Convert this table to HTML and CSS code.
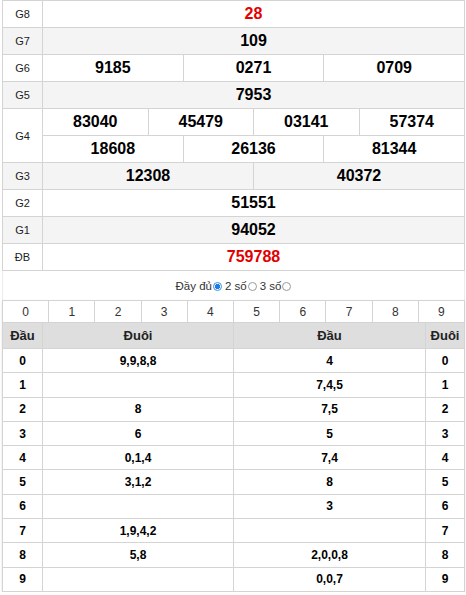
FILE: index.html
```html
<!DOCTYPE html>
<html lang="vi">
<head>
<meta charset="utf-8">
<title>Kết quả xổ số</title>
<link rel="stylesheet" href="styles.css">
</head>
<body>
<div class="wrap">
  <div class="kq">
    <div class="row"><div class="lbl">G8</div><div class="vals"><div class="line"><div class="num red">28</div></div></div></div>
    <div class="row alt"><div class="lbl">G7</div><div class="vals"><div class="line"><div class="num">109</div></div></div></div>
    <div class="row"><div class="lbl">G6</div><div class="vals"><div class="line"><div class="num">9185</div><div class="num">0271</div><div class="num">0709</div></div></div></div>
    <div class="row alt"><div class="lbl">G5</div><div class="vals"><div class="line"><div class="num">7953</div></div></div></div>
    <div class="row"><div class="lbl">G4</div><div class="vals">
      <div class="line"><div class="num">83040</div><div class="num">45479</div><div class="num">03141</div><div class="num">57374</div></div>
      <div class="line"><div class="num">18608</div><div class="num">26136</div><div class="num">81344</div></div>
    </div></div>
    <div class="row alt"><div class="lbl">G3</div><div class="vals"><div class="line"><div class="num">12308</div><div class="num">40372</div></div></div></div>
    <div class="row"><div class="lbl">G2</div><div class="vals"><div class="line"><div class="num">51551</div></div></div></div>
    <div class="row alt"><div class="lbl">G1</div><div class="vals"><div class="line"><div class="num">94052</div></div></div></div>
    <div class="row"><div class="lbl">ĐB</div><div class="vals"><div class="line"><div class="num red">759788</div></div></div></div>
  </div>

  <div class="opts">
    <label class="opt">Đầy đủ<input type="radio" name="mode" checked></label>
    <label class="opt">2 số<input type="radio" name="mode"></label>
    <label class="opt">3 số<input type="radio" name="mode"></label>
  </div>

  <div class="loto">
    <div class="digits">
      <div>0</div><div>1</div><div>2</div><div>3</div><div>4</div><div>5</div><div>6</div><div>7</div><div>8</div><div>9</div>
    </div>
    <div class="lrow head"><div>Đầu</div><div>Đuôi</div><div>Đầu</div><div>Đuôi</div></div>
    <div class="lrow"><div>0</div><div>9,9,8,8</div><div>4</div><div>0</div></div>
    <div class="lrow"><div>1</div><div></div><div>7,4,5</div><div>1</div></div>
    <div class="lrow"><div>2</div><div>8</div><div>7,5</div><div>2</div></div>
    <div class="lrow"><div>3</div><div>6</div><div>5</div><div>3</div></div>
    <div class="lrow"><div>4</div><div>0,1,4</div><div>7,4</div><div>4</div></div>
    <div class="lrow"><div>5</div><div>3,1,2</div><div>8</div><div>5</div></div>
    <div class="lrow"><div>6</div><div></div><div>3</div><div>6</div></div>
    <div class="lrow"><div>7</div><div>1,9,4,2</div><div></div><div>7</div></div>
    <div class="lrow"><div>8</div><div>5,8</div><div>2,0,0,8</div><div>8</div></div>
    <div class="lrow"><div>9</div><div></div><div>0,0,7</div><div>9</div></div>
  </div>
</div>
</body>
</html>
```

FILE: styles.css
```css
* { box-sizing: border-box; }
html, body { margin: 0; padding: 0; background: #fff; }
body { font-family: Arial, "Liberation Sans", sans-serif; color: #000; }

.wrap { width: 463px; margin-left: 2px; }

.kq { border-top: 1px solid #d4d4d4; border-left: 1px solid #d4d4d4; }
.row { display: flex; background: #fff; }
.row.alt { background: #f4f4f4; }
.lbl {
  width: 40px; flex: none;
  display: flex; align-items: center; justify-content: center;
  font-size: 11px; color: #222;
  border-right: 1px solid #d4d4d4; border-bottom: 1px solid #d4d4d4;
}
.vals { flex: 1; display: flex; flex-direction: column; }
.line { display: flex; height: 27px; }
.num {
  flex: 1 1 0; min-width: 0;
  display: flex; align-items: center; justify-content: center;
  font-size: 16px; font-weight: bold; color: #000;
  border-right: 1px solid #d4d4d4; border-bottom: 1px solid #d4d4d4;
}
.num.red { color: #e30000; }

.opts {
  height: 29px;
  display: flex; align-items: center; justify-content: center; gap: 3px;
  font-size: 11.5px; color: #333;
  border-left: 1px solid #ececec; border-right: 1px solid #ececec;
  padding-top: 1px;
}
.opt { display: flex; align-items: center; gap: 1px; }
.opt input {
  appearance: none; -webkit-appearance: none;
  width: 9px; height: 9px; margin: 0;
  border: 1px solid #9a9a9a; border-radius: 50%; background: #fff;
}
.opt input:checked {
  border-color: #3b8de0;
  background: radial-gradient(circle, #1a7ee6 0 2.3px, #fff 2.9px);
}

.loto {
  border-top: 1px solid #d4d4d4; border-left: 1px solid #d4d4d4;
  box-shadow: 0 1px 2px rgba(0,0,0,0.12);
}
.digits { display: flex; height: 22px; }
.digits > div {
  flex: 1 1 0;
  display: flex; align-items: center; justify-content: center;
  font-size: 12px; color: #333;
  border-right: 1px solid #d4d4d4; border-bottom: 1px solid #d4d4d4;
}
.lrow {
  display: grid; grid-template-columns: 40px 191px 192px 1fr;
  height: 24.3px;
}
.lrow > div {
  display: flex; align-items: center; justify-content: center;
  font-size: 12px; font-weight: bold; color: #000;
  border-right: 1px solid #d4d4d4; border-bottom: 1px solid #d4d4d4;
}
.lrow.head { height: 26px; background: #dedede; }
.lrow.head > div { font-size: 13px; color: #222; }
```
